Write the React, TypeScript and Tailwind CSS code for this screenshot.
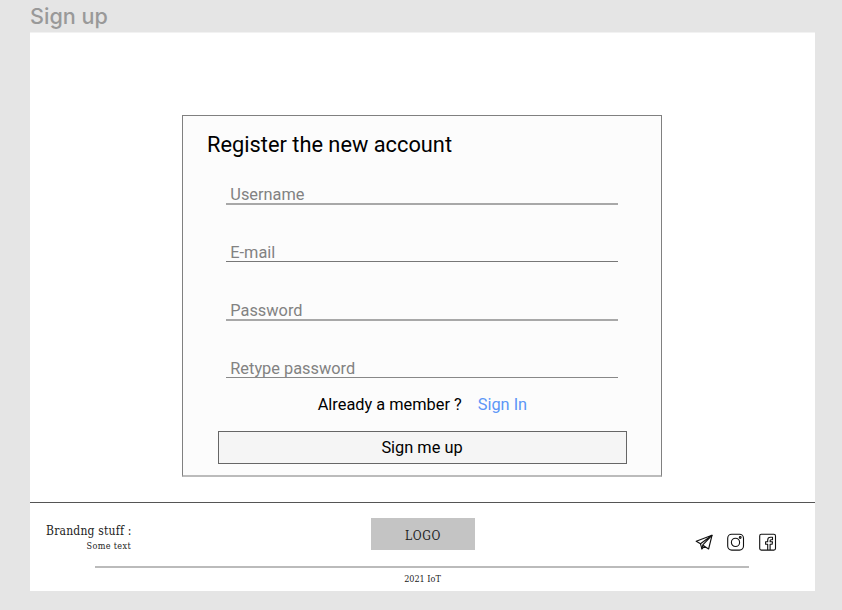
import React from "react";

const serif = "font-['DejaVu_Serif_Condensed','DejaVu_Serif',serif] [font-stretch:condensed]";

function Field({ label, line }: { label: string; line: string }) {
  return (
    <div className="flex h-[58px] flex-col">
      <label className="h-[18px] whitespace-nowrap pl-[4.3px] pt-px text-[16.35px] leading-[18px] text-[#828282]">{label}</label>
      <div className={`w-[392px] shrink-0 ${line}`} />
    </div>
  );
}

function Telegram() {
  return (
    <svg width="18" height="18" viewBox="0 0 18 18" fill="none" stroke="#111" strokeWidth="1.15" strokeLinejoin="round" strokeLinecap="round">
      <path d="M17 2.3 1.2 8.2l4.3 2.6 1.4 5 2.5-2.5 4.2 2.7z" />
      <path d="M17 2.3 5.5 10.8M17 2.3 7.8 11.8l-.9 4M7.8 11.8l1.6 1.5" />
    </svg>
  );
}

function Instagram() {
  return (
    <svg width="18" height="18" viewBox="0 0 18 18" fill="none" stroke="#111" strokeWidth="1.1">
      <rect x=".7" y="1.3" width="15.8" height="15.8" rx="4" />
      <circle cx="8.5" cy="9.4" r="4.1" />
      <circle cx="13.2" cy="4.5" r=".9" />
    </svg>
  );
}

function Facebook() {
  return (
    <svg width="18" height="18" viewBox="0 0 18 18" fill="none" stroke="#111" strokeWidth="1.1" strokeLinejoin="round">
      <rect x=".7" y="1.3" width="15.8" height="15.8" rx="1.6" />
      <path d="M8.7 17.1v-5.8H6.6V8.8h2.1V7.1c0-1.9 1.2-2.9 2.8-2.9h2v2.5h-1.4c-.7 0-1 .3-1 1v1.1h2.4l-.4 2.5h-2v5.8" />
    </svg>
  );
}

export default function App() {
  return (
    <div className="flex h-[610px] w-[842px] flex-col overflow-hidden bg-[#e5e5e5] pl-[30px] font-['Roboto',sans-serif] text-black">
      <div className="h-[32px] whitespace-nowrap font-['Inter',sans-serif] text-[21.6px] font-medium leading-[32px] text-[#999]">Sign up</div>
      <div className="flex h-[559px] w-[785px] flex-col border-t border-[#f2f2f2] bg-white">
        <main className="h-[469px] pl-[152px] pt-[82px]">
          <section className="h-[362px] w-[480px] border border-b-2 border-[#808080] border-b-[#bbb] bg-[#fcfcfc]">
            <h1 className="ml-[24px] mt-[16px] h-[54px] whitespace-nowrap text-[21.8px] leading-[26px]">Register the new account</h1>
            <div className="-mt-px ml-[43px] h-[209px]">
              <Field label="Username" line="h-[2px] bg-[#a8a8a8]" />
              <Field label="E-mail" line="h-px bg-[#777]" />
              <Field label="Password" line="h-[2px] bg-[#a8a8a8]" />
              <Field label="Retype password" line="h-px bg-[#888]" />
            </div>
            <div className="ml-[134.7px] flex h-[37px] gap-[16px] whitespace-nowrap text-[16.35px] leading-[22px]">
              <span>Already a member ?</span>
              <a className="text-[#5b96f7]">Sign In</a>
            </div>
            <button className="ml-[35px] flex h-[33px] w-[409px] items-center justify-center border border-[#666] bg-[#f5f5f5] pr-px pt-[2px] text-[16.35px]">Sign me up</button>
          </section>
        </main>
        <footer className={`flex h-[89px] flex-col border-t border-[#555] text-[#222] ${serif}`}>
          <div className="flex h-[63px] shrink-0">
            <div className="ml-[16px] mt-[20px] w-[85px] whitespace-nowrap text-right">
              <div className="text-[12px] leading-[16px] tracking-[.2px]">Brandng stuff :</div>
              <div className="text-[9px] leading-[15px] tracking-[.35px]">Some text</div>
            </div>
            <div className="ml-[240px] mt-[15px] flex h-[32px] w-[104px] items-center justify-center bg-[#c4c4c4] pt-[3px] text-[12px] tracking-[.6px]">LOGO</div>
            <div className="ml-[220px] mt-[30px] flex h-[18px] items-center">
              <Telegram />
              <span className="ml-[14px]"><Instagram /></span>
              <span className="ml-[14px]"><Facebook /></span>
            </div>
          </div>
          <div className="ml-[65px] h-[2px] w-[654px] shrink-0 bg-[#bbb]" />
          <div className="whitespace-nowrap pt-[4px] text-center text-[9px] leading-[14px]">2021 IoT</div>
        </footer>
      </div>
    </div>
  );
}
